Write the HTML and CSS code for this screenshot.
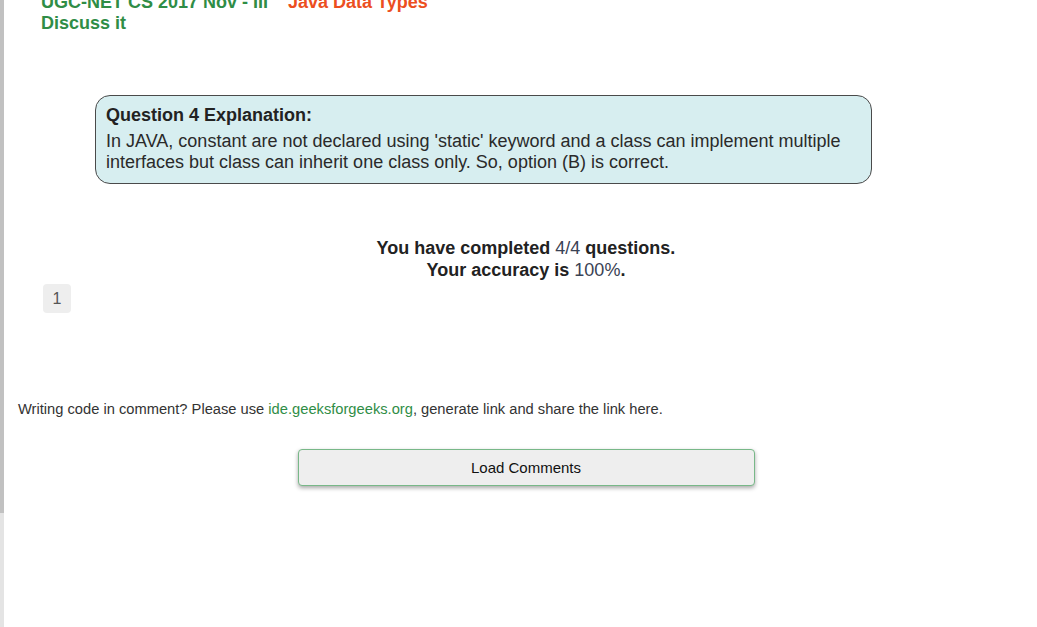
FILE: index.html
```html
<!DOCTYPE html>
<html>
<head>
<meta charset="utf-8">
<link rel="stylesheet" href="styles.css">
</head>
<body>
<div class="rail"><div class="rail-top"></div><div class="rail-bottom"></div></div>
<div class="main">
  <div class="tags">
    <div class="tag-row"><span class="tag-green">UGC-NET CS 2017 Nov - III</span><span class="tag-red">Java Data Types</span></div>
    <div class="tag-green">Discuss it</div>
  </div>
  <div class="explain">
    <div class="explain-title">Question 4 Explanation:</div>
    <div class="explain-body">In JAVA, constant are not declared using 'static' keyword and a class can implement multiple interfaces but class can inherit one class only. So, option (B) is correct.</div>
  </div>
  <div class="content">
    <div class="summary">
      <div>You have completed <span class="num">4/4</span> questions.</div>
      <div>Your accuracy is <span class="num">100%</span>.</div>
    </div>
    <div class="pager"><span class="page">1</span></div>
    <p class="note">Writing code in comment? Please use <a class="link" href="#">ide.geeksforgeeks.org</a>, generate link and share the link here.</p>
    <div class="btn-row"><button class="load-btn">Load Comments</button></div>
  </div>
</div>
</body>
</html>
```

FILE: styles.css
```css
html, body {
  margin: 0;
  padding: 0;
  height: 100%;
  overflow: hidden;
  background: #fff;
}
body {
  display: flex;
  font-family: "Liberation Sans", Arial, sans-serif;
  color: #222;
}
.rail {
  width: 4px;
  display: flex;
  flex-direction: column;
  flex-shrink: 0;
}
.rail-top {
  height: 513px;
  background: #c1c1c1;
}
.rail-bottom {
  flex: 1;
  background: #e4e4e4;
}
.main {
  flex: 1;
}
.tags {
  margin-top: -8px;
  padding-left: 37px;
  font-size: 18px;
  font-weight: bold;
  line-height: 21px;
}
.tag-row {
  display: flex;
  gap: 20px;
}
.tag-green {
  color: #2f8d46;
}
.tag-red {
  color: #ec4e20;
}
.explain {
  margin: 61px 0 0 91px;
  width: 754px;
  padding: 9px 11px 10px 10px;
  background: #d7eef0;
  border: 1px solid #4a4a4a;
  border-radius: 15px;
  font-size: 18px;
  line-height: 21px;
}
.explain-title {
  font-weight: bold;
  margin-bottom: 5px;
}
.explain-body {
  color: #2a2a2a;
}
.content {
  padding-left: 14px;
  width: 1016px;
}
.summary {
  margin-top: 53px;
  text-align: center;
  font-size: 18px;
  font-weight: bold;
  line-height: 22px;
  color: #222;
}
.num {
  font-weight: normal;
  color: #3a4254;
}
.pager {
  margin-top: 3px;
  padding-left: 25px;
  display: flex;
}
.page {
  width: 28px;
  height: 29px;
  display: flex;
  align-items: center;
  justify-content: center;
  background: #eeeeee;
  border-radius: 4px;
  color: #555;
  font-size: 16px;
}
.note {
  margin: 88px 0 0 0;
  font-size: 14.7px;
  line-height: 17px;
  color: #333;
}
.link {
  color: #2f8d46;
  text-decoration: none;
}
.btn-row {
  margin-top: 31px;
  display: flex;
  justify-content: center;
}
.load-btn {
  width: 457px;
  height: 37px;
  background: #eeeeee;
  border: 1px solid #78b888;
  border-radius: 4px;
  box-shadow: 0 2px 4px rgba(0, 0, 0, 0.35);
  font-family: "Liberation Sans", Arial, sans-serif;
  font-size: 15px;
  color: #111;
  padding: 0;
}
```
